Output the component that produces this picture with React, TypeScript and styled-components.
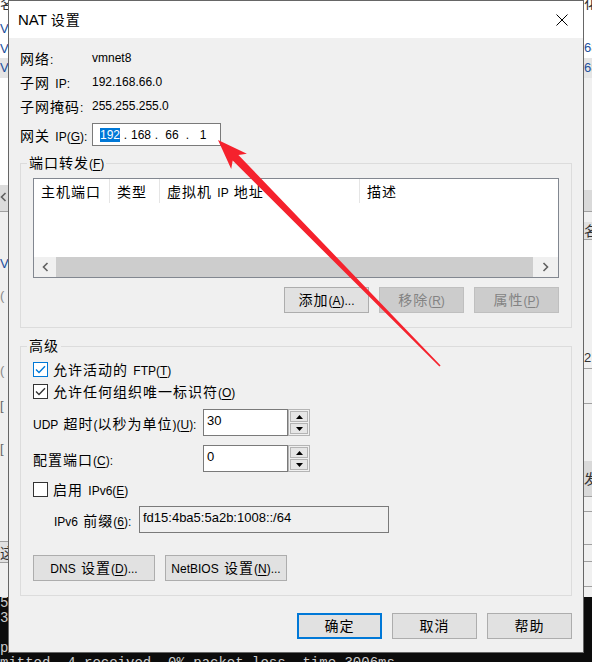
import { Fragment } from "react";
import styled, { createGlobalStyle, css } from "styled-components";

// Styles
const GlobalStyle = createGlobalStyle`
  html, body {
    margin: 0;
    padding: 0;
  }
  body {
    background: #0c0c0c;
    font-family: "Liberation Sans", "Noto Sans CJK SC", sans-serif;
    font-size: 12px;
    word-spacing: 2px;
    color: #000;
  }
`;

const Desktop = styled.div`
  position: relative;
  width: 592px;
  height: 662px;
  overflow: hidden;
  background: #0c0c0c;
`;

const BackWindow = styled.div`
  position: absolute;
  left: 0;
  top: 0;
  right: 0;
  height: 597px;
  display: flex;
  justify-content: space-between;
  background: #f0f0f0;
`;

const SidePane = styled.div`
  width: 8px;
  display: flex;
  flex-direction: column;
  overflow: hidden;
  background: #fff;
`;

const SideRow = styled.div<{ $h: number; $bg?: string; $fg?: string; $rule?: boolean; $lh?: number }>`
  flex: none;
  height: ${(p) => p.$h}px;
  line-height: ${(p) => p.$lh ?? p.$h}px;
  background: ${(p) => p.$bg ?? "transparent"};
  color: ${(p) => p.$fg ?? "#333"};
  border-bottom: ${(p) => (p.$rule ? "1px solid #a0a0a0" : "none")};
  font-size: 13px;
  white-space: nowrap;
  overflow: hidden;
`;

const Terminal = styled.div`
  position: absolute;
  left: 0;
  right: 0;
  top: 597px;
  bottom: 0;
  background: #0c0c0c;
  color: #cccccc;
  font-family: "Liberation Mono", monospace;
  font-size: 14px;
  line-height: 15px;
  word-spacing: 0;
  white-space: pre;
  overflow: hidden;
`;

const TermLines = styled.div`
  margin-top: -1px;
`;

const Dialog = styled.div`
  position: absolute;
  left: 8px;
  top: 0;
  width: 576px;
  height: 653px;
  box-sizing: border-box;
  border: 1px solid #666;
  background: #f0f0f0;
  display: flex;
  flex-direction: column;
`;

const TitleBar = styled.div`
  height: 37px;
  flex: none;
  background: #fff;
  display: flex;
  align-items: center;
  justify-content: space-between;
`;

const TitleText = styled.div`
  padding-left: 9px;
  font-size: 15px;
  line-height: 20px;
  word-spacing: 0;
`;

const CloseBtn = styled.div`
  width: 42px;
  height: 37px;
  display: flex;
  align-items: center;
  justify-content: center;
`;

const Body = styled.div`
  flex: 1;
  display: flex;
  flex-direction: column;
  padding: 0 11px 13px;
`;

const InfoGrid = styled.div`
  display: grid;
  grid-template-columns: 72px auto;
  grid-auto-rows: 24px;
  align-items: center;
  margin-top: 8px;
`;

const Row = styled.div<{ $mt?: number; $h?: number; $indent?: number }>`
  display: flex;
  align-items: center;
  height: ${(p) => p.$h ?? 22}px;
  margin-top: ${(p) => p.$mt ?? 0}px;
  padding-left: ${(p) => p.$indent ?? 0}px;
  flex: none;
`;

const Label = styled.div<{ $w: number }>`
  width: ${(p) => p.$w}px;
  flex: none;
  white-space: nowrap;
`;

const IpBox = styled.div`
  width: 129px;
  height: 23px;
  box-sizing: border-box;
  border: 1px solid #7a7a7a;
  background: #fff;
  display: flex;
  align-items: center;
  padding-left: 4px;
`;

const IpField = styled.span`
  width: 26px;
  display: flex;
  justify-content: center;
`;

const IpSel = styled.span`
  background: #0078d7;
  color: #fff;
  line-height: 14px;
`;

const IpDot = styled.span`
  width: 5px;
  text-align: center;
`;

const Group = styled.fieldset<{ $mt: number; $pt: number }>`
  margin: ${(p) => p.$mt}px 0 0;
  padding: ${(p) => p.$pt}px 12px 14px;
  border: 1px solid #dcdcdc;
  min-width: 0;
  flex: none;
`;

const GroupLabel = styled.legend`
  display: flex;
  align-items: center;
  height: 16px;
  padding: 0 2px;
  margin-left: -6px;
  line-height: 16px;
`;

const ListView = styled.div`
  height: 100px;
  box-sizing: border-box;
  border: 1px solid #828790;
  background: #fff;
  display: flex;
  flex-direction: column;
`;

const ListHeader = styled.div`
  display: grid;
  grid-template-columns: 76px 50px 200px 1fr;
  height: 24px;
  flex: none;
`;

const HeaderCell = styled.div<{ $last?: boolean }>`
  display: flex;
  align-items: center;
  padding-left: 7px;
  white-space: nowrap;
  overflow: hidden;
  border-right: ${(p) => (p.$last ? "none" : "1px solid #e5e5e5")};
`;

const ListBody = styled.div`
  flex: 1;
`;

const HScroll = styled.div`
  display: flex;
  height: 20px;
  flex: none;
  background: #f0f0f0;
`;

const ScrollArrow = styled.div<{ $w: number }>`
  width: ${(p) => p.$w}px;
  display: flex;
  align-items: center;
  justify-content: center;
`;

const ScrollThumb = styled.div`
  flex: 1;
  background: #cdcdcd;
`;

const ButtonRow = styled.div<{ $mt: number; $end?: boolean }>`
  display: flex;
  gap: 10px;
  margin-top: ${(p) => p.$mt}px;
  justify-content: ${(p) => (p.$end ? "flex-end" : "flex-start")};
  flex: none;
`;

const Button = styled.button<{ $w: number; $primary?: boolean }>`
  width: ${(p) => p.$w}px;
  height: 26px;
  box-sizing: border-box;
  padding: 0;
  border: 1px solid #adadad;
  background: #e1e1e1;
  font: inherit;
  word-spacing: 2px;
  color: #000;
  line-height: 20px;
  white-space: nowrap;
  &:disabled {
    background: #cccccc;
    border-color: #bfbfbf;
    color: #838383;
  }
  ${(p) =>
    p.$primary &&
    css`
      border: 2px solid #0078d7;
    `}
`;

const CheckBox = styled.span<{ $focus?: boolean }>`
  width: 15px;
  height: 15px;
  box-sizing: border-box;
  flex: none;
  border: 1px solid ${(p) => (p.$focus ? "#0078d7" : "#333")};
  color: ${(p) => (p.$focus ? "#0078d7" : "#333")};
  background: #fff;
  display: flex;
  align-items: center;
  justify-content: center;
  margin-right: 5px;
`;

const Spin = styled.div`
  display: flex;
  height: 27px;
`;

const EditBox = styled.div<{ $w: number; $readonly?: boolean }>`
  width: ${(p) => p.$w}px;
  height: 27px;
  box-sizing: border-box;
  border: 1px solid #7a7a7a;
  background: ${(p) => (p.$readonly ? "#f0f0f0" : "#fff")};
  padding: 3px 3px 0;
  font-size: 13px;
  line-height: 15px;
  white-space: nowrap;
`;

const SpinButtons = styled.div`
  width: 22px;
  box-sizing: border-box;
  border: 1px solid #b4b4b4;
  padding: 1px;
  display: flex;
  flex-direction: column;
  gap: 1px;
  background: #f0f0f0;
`;

const SpinBtn = styled.div`
  flex: 1;
  border: 1px solid #b4b4b4;
  background: #e6e6e6;
  display: flex;
  align-items: center;
  justify-content: center;
`;

const Han = styled.span`
  font-family: "Noto Sans CJK SC", sans-serif;
  font-size: 14px;
  letter-spacing: 1px;
`;

const Key = styled.span`
  text-decoration: underline;
  text-underline-offset: 2px;
`;

const Arrow = styled.svg`
  position: absolute;
  left: 0;
  top: 0;
  pointer-events: none;
`;

// text helpers: CJK runs get their own font, "&x" marks a mnemonic
const HAN_RE = /([\u2e80-\u9fff\uf900-\ufaff\uff00-\uffef]+)/;

const Latin = ({ s }: { s: string }) => (
  <>
    {s.split(/&(.)/).map((p, i) =>
      i % 2 === 1 ? <Key key={i}>{p}</Key> : <Fragment key={i}>{p}</Fragment>
    )}
  </>
);

const Txt = ({ s }: { s: string }) => (
  <span>
    {s.split(HAN_RE).map((part, i) =>
      i % 2 === 1 ? <Han key={i}>{part}</Han> : <Latin key={i} s={part} />
    )}
  </span>
);

const CloseIcon = () => (
  <svg width="12" height="12" viewBox="0 0 12 12">
    <path d="M0.5 0.5L11.5 11.5M11.5 0.5L0.5 11.5" stroke="#000" strokeWidth="1" fill="none" />
  </svg>
);

const Chevron = ({ dir }: { dir: "left" | "right" }) => (
  <svg width="7" height="10" viewBox="0 0 7 10">
    <polyline
      points={dir === "left" ? "5.5,1 1.5,5 5.5,9" : "1.5,1 5.5,5 1.5,9"}
      stroke="#606060"
      strokeWidth="1.6"
      fill="none"
    />
  </svg>
);

const Tick = () => (
  <svg width="11" height="9" viewBox="0 0 11 9">
    <polyline points="1,4.5 4,7.5 10,1.2" stroke="currentColor" strokeWidth="1.4" fill="none" />
  </svg>
);

const Tri = ({ up }: { up?: boolean }) => (
  <svg width="7" height="4" viewBox="0 0 7 4">
    <polygon points={up ? "0,4 3.5,0 7,4" : "0,0 7,0 3.5,4"} fill="#000" />
  </svg>
);

const arrowPoints = (() => {
  const tip = [218, 140];
  const tail = [440, 366];
  const dx = tail[0] - tip[0];
  const dy = tail[1] - tip[1];
  const len = Math.hypot(dx, dy);
  const u = [dx / len, dy / len];
  const n = [-u[1], u[0]];
  const at = (d: number, w: number) =>
    `${(tip[0] + u[0] * d + n[0] * w).toFixed(1)},${(tip[1] + u[1] * d + n[1] * w).toFixed(1)}`;
  return [
    at(0, 0),
    at(30, 11),
    at(25, 4),
    at(len, 0.8),
    at(len, -0.8),
    at(25, -4),
    at(30, -11),
  ].join(" ");
})();

const headers = ["主机端口", "类型", "虚拟机 IP 地址", "描述"];

const termLines = [
  "5",
  "3",
  "",
  "p",
  "mitted, 4 received, 0% packet loss, time 3006ms",
];

const SpinControl = ({ value }: { value: string }) => (
  <Spin>
    <EditBox $w={85}>{value}</EditBox>
    <SpinButtons>
      <SpinBtn>
        <Tri up />
      </SpinBtn>
      <SpinBtn>
        <Tri />
      </SpinBtn>
    </SpinButtons>
  </Spin>
);

const App = () => {
  return (
    <>
      <GlobalStyle />
      <Desktop>
        <BackWindow>
          <SidePane>
            <SideRow $h={10} $lh={6}>
              <Txt s="名称" />
            </SideRow>
            <SideRow $h={9} />
            <SideRow $h={20} $fg="#1c4f9c">V</SideRow>
            <SideRow $h={19} $fg="#1c4f9c">V</SideRow>
            <SideRow $h={20} $fg="#1c4f9c" $bg="#e5e5e5">V</SideRow>
            <SideRow $h={107} />
            <SideRow $h={26} $bg="#dcdcdc" $rule>
              <Chevron dir="left" />
            </SideRow>
            <SideRow $h={42} $bg="#f0f0f0" />
            <SideRow $h={20} $bg="#f0f0f0" $fg="#1c4f9c">V</SideRow>
            <SideRow $h={12} $bg="#f0f0f0" />
            <SideRow $h={20} $bg="#f0f0f0" $fg="#888">(</SideRow>
            <SideRow $h={55} $bg="#f0f0f0" />
            <SideRow $h={20} $bg="#f0f0f0" $fg="#888">(</SideRow>
            <SideRow $h={15} $bg="#f0f0f0" />
            <SideRow $h={20} $bg="#f0f0f0" $fg="#666">[</SideRow>
            <SideRow $h={23} $bg="#f0f0f0" />
            <SideRow $h={20} $bg="#f0f0f0" $fg="#666">[</SideRow>
            <SideRow $h={82} $bg="#f0f0f0" $rule />
            <SideRow $h={20} $bg="#e1e1e1" $rule>
              <Txt s="这" />
            </SideRow>
            <SideRow $h={40} $bg="#f0f0f0" />
          </SidePane>
          <SidePane>
            <SideRow $h={10} $lh={6}>
              <Txt s="化" />
            </SideRow>
            <SideRow $h={28} />
            <SideRow $h={20} $fg="#1c4f9c">68</SideRow>
            <SideRow $h={20} $fg="#1c4f9c" $bg="#e5e5e5">68</SideRow>
            <SideRow $h={112} $bg="#f0f0f0" />
            <SideRow $h={21} $bg="#d9d9d9" $rule />
            <SideRow $h={10} $bg="#f0f0f0" />
            <SideRow $h={17} $bg="#e0e0e0" $rule>
              <Txt s="名" />
            </SideRow>
            <SideRow $h={108} $bg="#f0f0f0" />
            <SideRow $h={20} $bg="#f0f0f0" $rule>
              2!
            </SideRow>
            <SideRow $h={34} $bg="#f0f0f0" $rule />
            <SideRow $h={57} $bg="#f0f0f0" />
            <SideRow $h={35} $bg="#d9d9d9" $rule>
              <Txt s="发" />
            </SideRow>
            <SideRow $h={14} $bg="#f0f0f0" $rule />
            <SideRow $h={32} $bg="#f0f0f0" $rule />
            <SideRow $h={16} $bg="#f0f0f0" $rule />
            <SideRow $h={24} $bg="#f0f0f0" $rule />
            <SideRow $h={12} $bg="#f0f0f0" />
          </SidePane>
        </BackWindow>

        <Terminal>
          <TermLines>
            {termLines.map((l, i) => (
              <div key={i}>{l || " "}</div>
            ))}
          </TermLines>
        </Terminal>

        <Dialog>
          <TitleBar>
            <TitleText>
              <Txt s="NAT 设置" />
            </TitleText>
            <CloseBtn>
              <CloseIcon />
            </CloseBtn>
          </TitleBar>

          <Body>
            <InfoGrid>
              <Txt s="网络:" />
              <span>vmnet8</span>
              <Txt s="子网 IP:" />
              <span>192.168.66.0</span>
              <Txt s="子网掩码:" />
              <span>255.255.255.0</span>
            </InfoGrid>

            <Row $mt={5} $h={23}>
              <Label $w={72}>
                <Txt s="网关 IP(&G):" />
              </Label>
              <IpBox>
                <IpField>
                  <IpSel>192</IpSel>
                </IpField>
                <IpDot>.</IpDot>
                <IpField>168</IpField>
                <IpDot>.</IpDot>
                <IpField>66</IpField>
                <IpDot>.</IpDot>
                <IpField>1</IpField>
              </IpBox>
            </Row>

            <Group $mt={9} $pt={7}>
              <GroupLabel>
                <Txt s="端口转发(&F)" />
              </GroupLabel>
              <ListView>
                <ListHeader>
                  {headers.map((h, i) => (
                    <HeaderCell key={h} $last={i === headers.length - 1}>
                      <Txt s={h} />
                    </HeaderCell>
                  ))}
                </ListHeader>
                <ListBody />
                <HScroll>
                  <ScrollArrow $w={22}>
                    <Chevron dir="left" />
                  </ScrollArrow>
                  <ScrollThumb />
                  <ScrollArrow $w={25}>
                    <Chevron dir="right" />
                  </ScrollArrow>
                </HScroll>
              </ListView>
              <ButtonRow $mt={9} $end>
                <Button $w={85}>
                  <Txt s="添加(&A)..." />
                </Button>
                <Button $w={85} disabled>
                  <Txt s="移除(&R)" />
                </Button>
                <Button $w={85} disabled>
                  <Txt s="属性(&P)" />
                </Button>
              </ButtonRow>
            </Group>

            <Group $mt={10} $pt={4}>
              <GroupLabel>
                <Txt s="高级" />
              </GroupLabel>
              <Row>
                <CheckBox $focus>
                  <Tick />
                </CheckBox>
                <Txt s="允许活动的 FTP(&T)" />
              </Row>
              <Row>
                <CheckBox>
                  <Tick />
                </CheckBox>
                <Txt s="允许任何组织唯一标识符(&O)" />
              </Row>
              <Row $mt={7} $h={27}>
                <Label $w={170}>
                  <Txt s="UDP 超时(以秒为单位)(&U):" />
                </Label>
                <SpinControl value="30" />
              </Row>
              <Row $mt={9} $h={27}>
                <Label $w={170}>
                  <Txt s="配置端口(&C):" />
                </Label>
                <SpinControl value="0" />
              </Row>
              <Row $mt={6}>
                <CheckBox />
                <Txt s="启用 IPv6(&E)" />
              </Row>
              <Row $mt={6} $h={27} $indent={21}>
                <Label $w={85}>
                  <Txt s="IPv6 前缀(&6):" />
                </Label>
                <EditBox $w={250} $readonly>
                  fd15:4ba5:5a2b:1008::/64
                </EditBox>
              </Row>
              <ButtonRow $mt={22}>
                <Button $w={122}>
                  <Txt s="DNS 设置(&D)..." />
                </Button>
                <Button $w={122}>
                  <Txt s="NetBIOS 设置(&N)..." />
                </Button>
              </ButtonRow>
            </Group>

            <ButtonRow $mt={17} $end>
              <Button $w={85} $primary>
                <Txt s="确定" />
              </Button>
              <Button $w={85}>
                <Txt s="取消" />
              </Button>
              <Button $w={85}>
                <Txt s="帮助" />
              </Button>
            </ButtonRow>
          </Body>
        </Dialog>

        <Arrow width="592" height="662" viewBox="0 0 592 662">
          <polygon points={arrowPoints} fill="#f5222d" />
        </Arrow>
      </Desktop>
    </>
  );
};

export default App;
